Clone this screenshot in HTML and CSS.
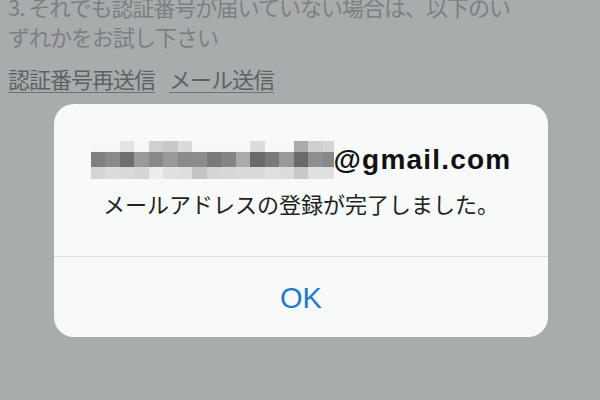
FILE: index.html
```html
<!DOCTYPE html>
<html lang="ja">
<head>
<meta charset="utf-8">
<link rel="stylesheet" href="styles.css">
</head>
<body>
<div class="page">
  <p class="para">3. それでも認証番号が届いていない場合は、以下のい<br>ずれかをお試し下さい</p>
  <div class="links"><a class="link">認証番号再送信</a><a class="link">メール送信</a></div>
</div>
<div class="dialog">
  <div class="dialog-body">
    <div class="title">
      <div class="mosaic">
        <i style="background:#f7f7f7"></i><i style="background:#f7f7f7"></i><i style="background:#e4e4e4"></i><i style="background:#f7f7f7"></i><i style="background:#d0d0d0"></i><i style="background:#c8c8c8"></i><i style="background:#dadada"></i><i style="background:#f7f7f7"></i><i style="background:#f7f7f7"></i><i style="background:#f7f7f7"></i><i style="background:#f7f7f7"></i><i style="background:#dcdcdc"></i><i style="background:#f7f7f7"></i><i style="background:#f7f7f7"></i><i style="background:#aaaaaa"></i><i style="background:#cfcfcf"></i><i style="background:#d5d5d5"></i>
        <i style="background:#808080"></i><i style="background:#8a8a8a"></i><i style="background:#6e6e6e"></i><i style="background:#999999"></i><i style="background:#888888"></i><i style="background:#999999"></i><i style="background:#8a8a8a"></i><i style="background:#8c8c8c"></i><i style="background:#7a7a7a"></i><i style="background:#858585"></i><i style="background:#aaaaaa"></i><i style="background:#6a6a6a"></i><i style="background:#7a7a7a"></i><i style="background:#999999"></i><i style="background:#6a6a6a"></i><i style="background:#8f8f8f"></i><i style="background:#888888"></i>
        <i style="background:#d4d4d4"></i><i style="background:#dcdcdc"></i><i style="background:#dadada"></i><i style="background:#d6d6d6"></i><i style="background:#ececec"></i><i style="background:#e0e0e0"></i><i style="background:#dedede"></i><i style="background:#c4c4c4"></i><i style="background:#d4d4d4"></i><i style="background:#d8d8d8"></i><i style="background:#dadada"></i><i style="background:#dadada"></i><i style="background:#e0e0e0"></i><i style="background:#dcdcdc"></i><i style="background:#c8c8c8"></i><i style="background:#e0e0e0"></i><i style="background:#e0e0e0"></i>
      </div>
      <span class="email">@gmail.com</span>
    </div>
    <p class="msg">メールアドレスの登録が完了しました。</p>
  </div>
  <div class="actions"><span class="ok">OK</span></div>
</div>
</body>
</html>
```

FILE: styles.css
```css
html, body {
  margin: 0;
  padding: 0;
}
body {
  width: 600px;
  height: 400px;
  overflow: hidden;
  background: #a9acad;
  font-family: "Noto Sans CJK JP", "Noto Sans", sans-serif;
  position: relative;
}
.page {
  padding: 0 8px;
  margin-top: -9px;
  color: #7b7f81;
  font-size: 22px;
  letter-spacing: -1px;
}
.para {
  margin: 0;
  line-height: 30px;
}
.links {
  display: flex;
  gap: 14px;
  margin-top: 13px;
}
.link {
  color: #5e6264;
  line-height: 28px;
  border-bottom: 1.5px solid #6e7274;
}
.dialog {
  position: absolute;
  left: 54px;
  top: 104px;
  width: 494px;
  height: 233px;
  background: #f8f9f9;
  border-radius: 20px;
  display: flex;
  flex-direction: column;
  overflow: hidden;
}
.dialog-body {
  height: 153px;
  padding-top: 37px;
  box-sizing: border-box;
  border-bottom: 1px solid #dcdddd;
}
.title {
  display: flex;
  justify-content: center;
  align-items: flex-start;
}
.mosaic {
  display: grid;
  grid-template-columns: repeat(16, 14.5px) 11px;
  grid-template-rows: 11px 15px 12px;
}
.mosaic i {
  display: block;
}
.email {
  font-family: "Liberation Sans", Arial, sans-serif;
  font-weight: bold;
  font-size: 28px;
  letter-spacing: 1.2px;
  color: #111111;
  line-height: 32px;
  margin-top: 3px;
}
.msg {
  margin: 9px 0 0;
  text-align: center;
  font-size: 22px;
  line-height: 30px;
  color: #222222;
}
.actions {
  flex: 1;
  display: flex;
  align-items: center;
  justify-content: center;
}
.ok {
  font-family: "Liberation Sans", Arial, sans-serif;
  font-size: 29px;
  color: #1f7acc;
  margin-top: 3px;
}
```
